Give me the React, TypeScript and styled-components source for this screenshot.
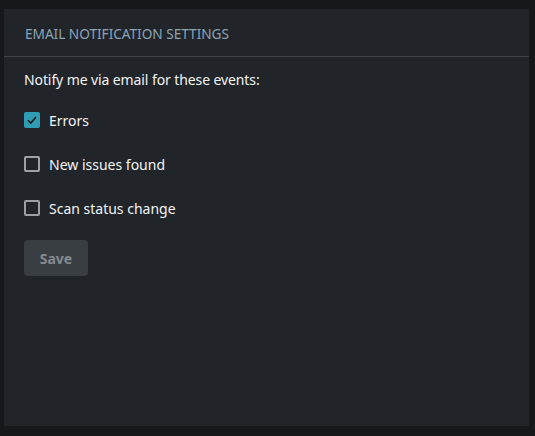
import React, { useState } from "react";
import styled, { createGlobalStyle } from "styled-components";

const GlobalStyle = createGlobalStyle`
  html, body {
    margin: 0;
    padding: 0;
    background: #15191c;
  }
  body {
    font-family: "Noto Sans", "DejaVu Sans", sans-serif;
    color: #f1f3f5;
  }
`;

const Page = styled.div`
  padding: 9px 6px 10px 4px;
  height: 436px;
  box-sizing: border-box;
  display: flex;
`;

const Panel = styled.section`
  flex: 1;
  background: #212529;
  display: flex;
  flex-direction: column;
`;

const PanelHeader = styled.header`
  height: 48px;
  box-sizing: border-box;
  padding: 1px 21px 0;
  display: flex;
  align-items: center;
  border-bottom: 1px solid #3d4247;

  h2 {
    margin: 0;
    font-size: 13.7px;
    font-weight: 400;
    letter-spacing: -0.05px;
    color: #8ba3b7;
    text-transform: uppercase;
  }
`;

const PanelBody = styled.div`
  padding: 13px 20px 10px;
  display: flex;
  flex-direction: column;

  .intro {
    margin: 0 0 8px;
    font-size: 14px;
    letter-spacing: -0.1px;
    line-height: 20px;
  }
`;

const OptionRow = styled.label`
  height: 44px;
  display: flex;
  align-items: center;
  gap: 9px;
  font-size: 14px;
  cursor: pointer;
`;

const Box = styled.span<{ $checked: boolean }>`
  width: 16px;
  height: 16px;
  box-sizing: border-box;
  border-radius: 2px;
  border: 2px solid ${(p) => (p.$checked ? "#2f9db3" : "#9aa1a7")};
  background: ${(p) => (p.$checked ? "#2f9db3" : "transparent")};
  display: flex;
  align-items: center;
  justify-content: center;
`;

const SaveButton = styled.button`
  margin-top: 10px;
  width: 64px;
  height: 36px;
  border: none;
  border-radius: 4px;
  background: #393e42;
  color: #858b90;
  font-family: inherit;
  font-size: 14px;
  font-weight: 700;
  align-self: flex-start;
`;

const options = [
  { id: "errors", label: "Errors" },
  { id: "issues", label: "New issues found" },
  { id: "status", label: "Scan status change" },
];

export default function App() {
  const [checked, setChecked] = useState<Record<string, boolean>>({ errors: true });

  return (
    <>
      <GlobalStyle />
      <Page>
        <Panel>
          <PanelHeader>
            <h2>Email Notification Settings</h2>
          </PanelHeader>
          <PanelBody>
            <p className="intro">Notify me via email for these events:</p>
            {options.map((o) => (
              <OptionRow
                key={o.id}
                onClick={() => setChecked({ ...checked, [o.id]: !checked[o.id] })}
              >
                <Box $checked={!!checked[o.id]}>
                  {checked[o.id] && (
                    <svg width="12" height="12" viewBox="0 0 12 12">
                      <path d="M2 6.2 L4.8 9 L10 3" fill="none" stroke="#15191c" strokeWidth="1.6" />
                    </svg>
                  )}
                </Box>
                {o.label}
              </OptionRow>
            ))}
            <SaveButton disabled>Save</SaveButton>
          </PanelBody>
        </Panel>
      </Page>
    </>
  );
}
